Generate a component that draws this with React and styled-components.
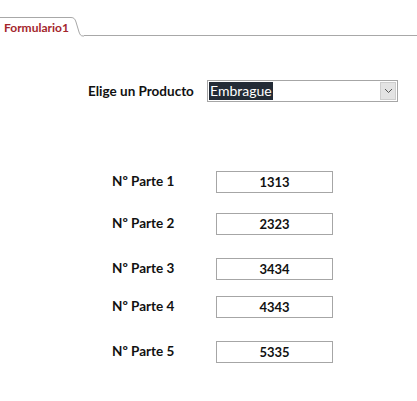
import React from 'react';
import styled, { createGlobalStyle } from 'styled-components';

const GlobalStyle = createGlobalStyle`
    html, body {
        margin: 0;
        padding: 0;
        background: #ffffff;
    }
    body {
        font-family: Lato, "Liberation Sans", sans-serif;
    }
`;

const Page = styled.div`
    width: 417px;
    height: 401px;
    background: #fff;
    overflow: hidden;
`;

const TabStrip = styled.div`
    display: flex;
    align-items: flex-end;
    height: 37px;
    box-sizing: border-box;
`;

const Tab = styled.div`
    display: flex;
    align-items: center;
    height: 19px;
    padding: 0 1px 0 4px;
    border-top: 1px solid #a8a8a8;
    color: #a4262c;
    font-size: 12px;
    font-weight: 700;
    line-height: 1;
`;

const TabCurve = styled.svg`
    display: block;
    flex: none;
    width: 14px;
    height: 20px;
`;

const TabLine = styled.div`
    flex: 1;
    height: 1px;
    background: #a8a8a8;
    margin-bottom: 1px;
`;

const Body = styled.div`
    display: flex;
    flex-direction: column;
`;

const ProductRow = styled.div`
    display: flex;
    align-items: center;
    margin-top: 43px;
    padding-left: 88px;
`;

const ProductLabel = styled.div`
    width: 119px;
    font-size: 13.5px;
    font-weight: 700;
    color: #111;
`;

const Combo = styled.div`
    display: flex;
    align-items: center;
    width: 191px;
    height: 22px;
    box-sizing: border-box;
    border: 1px solid #a6a6a6;
    padding: 1px;
`;

const ComboValue = styled.div`
    flex: 1;
    display: flex;
    align-items: center;
    height: 100%;
`;

const Selected = styled.span`
    background: #232b36;
    color: #fff;
    font-size: 14px;
    line-height: 18px;
    padding: 0 1px;
`;

const ComboButton = styled.div`
    display: flex;
    align-items: center;
    justify-content: center;
    width: 16px;
    height: 18px;
    background: #e3e3e3;
    border: 1px solid #cdcdcd;
    box-sizing: border-box;
`;

const Parts = styled.div`
    display: flex;
    flex-direction: column;
    margin-top: 69px;
`;

const PartRow = styled.div`
    display: flex;
    align-items: center;
    margin-top: ${(p) => p.$gap}px;
    padding-left: 112px;
`;

const PartLabel = styled.div`
    width: 104px;
    font-size: 13.5px;
    font-weight: 700;
    color: #111;
    line-height: 1;
`;

const PartBox = styled.div`
    display: flex;
    align-items: center;
    justify-content: center;
    width: 117px;
    height: 22px;
    box-sizing: border-box;
    border: 1px solid #a6a6a6;
    font-size: 13px;
    font-weight: 700;
    color: #111;
`;

const parts = [
    { label: 'Nº Parte 1', value: '1313', gap: 0 },
    { label: 'Nº Parte 2', value: '2323', gap: 20 },
    { label: 'Nº Parte 3', value: '3434', gap: 23 },
    { label: 'Nº Parte 4', value: '4343', gap: 16 },
    { label: 'Nº Parte 5', value: '5335', gap: 23 },
];

export default function App() {
    return (
        <Page>
            <GlobalStyle />
            <TabStrip>
                <Tab>Formulario1</Tab>
                <TabCurve viewBox="0 0 14 20">
                    <path d="M0 0.5 H1 C4 0.5 5 2 6 5 L9 15 C10 18 11 19 13 19 H14" fill="none" stroke="#a8a8a8" strokeWidth="1" />
                </TabCurve>
                <TabLine />
            </TabStrip>
            <Body>
                <ProductRow>
                    <ProductLabel>Elige un Producto</ProductLabel>
                    <Combo>
                        <ComboValue>
                            <Selected>Embrague</Selected>
                        </ComboValue>
                        <ComboButton>
                            <svg width="9" height="6" viewBox="0 0 9 6">
                                <path d="M1 1 L4.5 4.5 L8 1" fill="none" stroke="#555" strokeWidth="1" />
                            </svg>
                        </ComboButton>
                    </Combo>
                </ProductRow>
                <Parts>
                    {parts.map((p) => (
                        <PartRow key={p.label} $gap={p.gap}>
                            <PartLabel>{p.label}</PartLabel>
                            <PartBox>{p.value}</PartBox>
                        </PartRow>
                    ))}
                </Parts>
            </Body>
        </Page>
    );
}
